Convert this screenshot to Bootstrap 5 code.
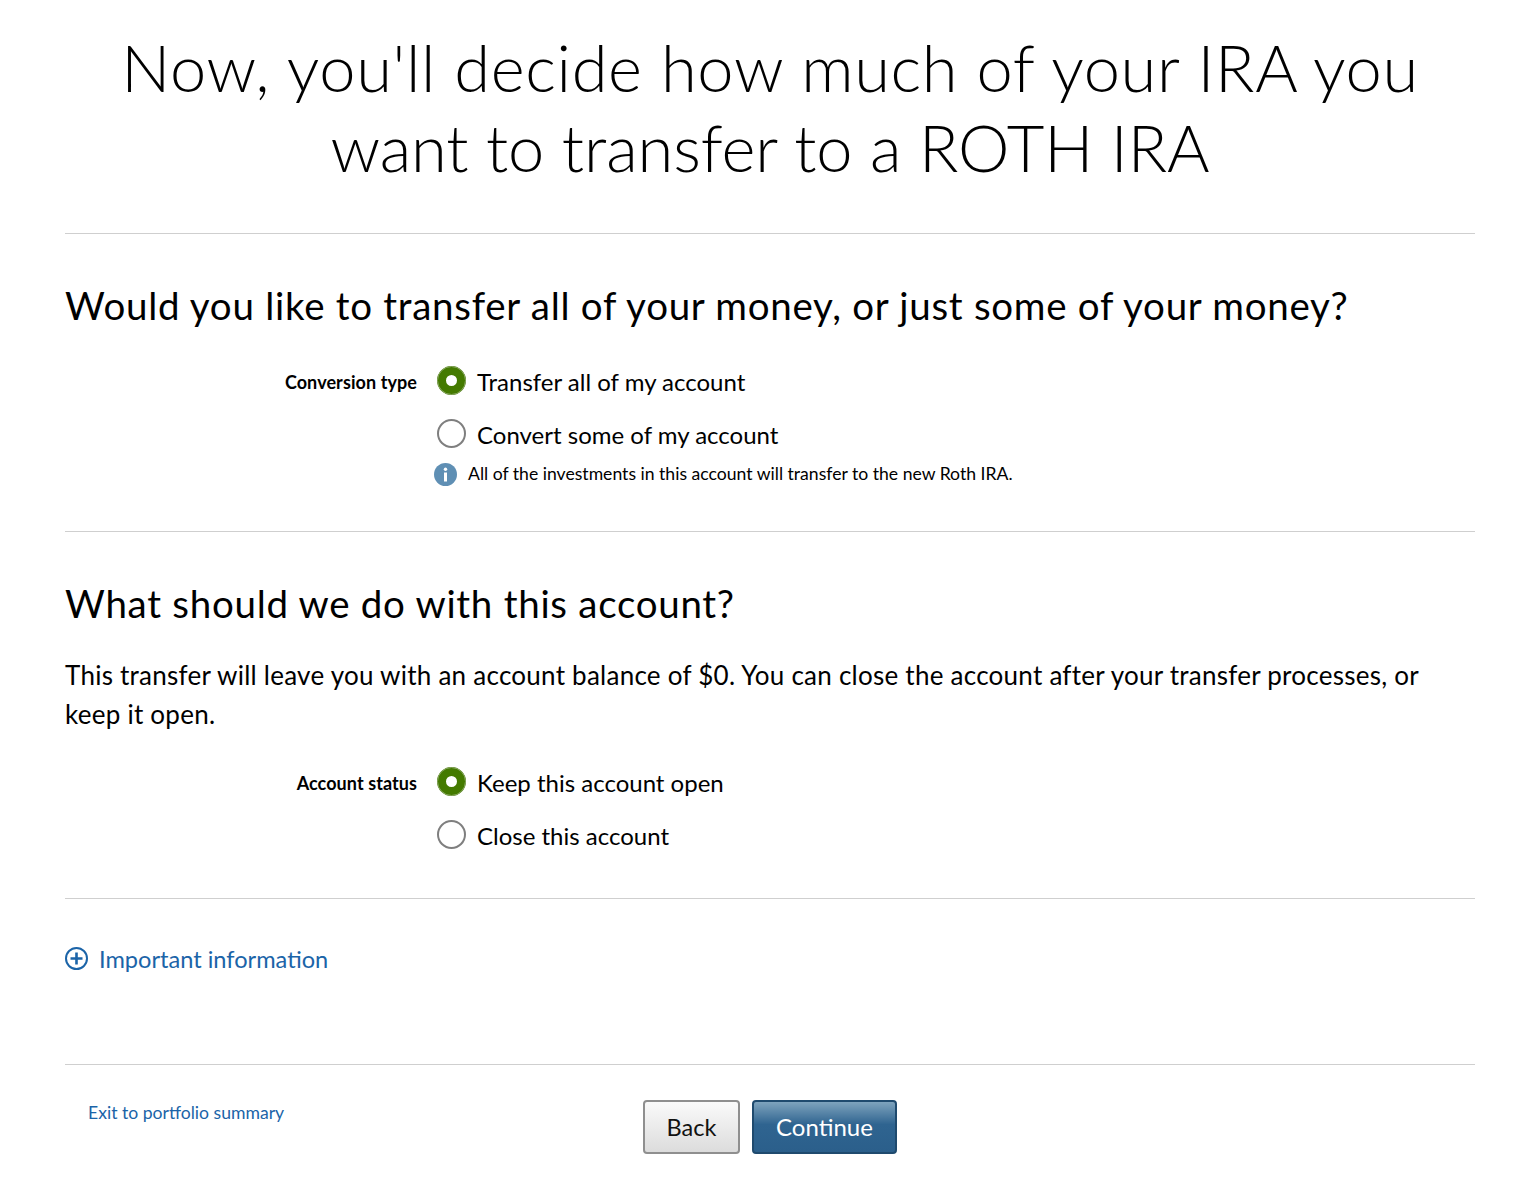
<!DOCTYPE html>
<html lang="en">
<head>
<meta charset="utf-8">
<title>Roth conversion</title>
<link href="https://cdn.jsdelivr.net/npm/bootstrap@5.3.0/dist/css/bootstrap.min.css" rel="stylesheet">
<style>
html,body{background:#fff;}
body{font-family:Lato,"Noto Sans",sans-serif;color:#000;font-size:24px;}
.page-wrap{padding:0 61px 0 65px;}
.main-title{font-size:65px;font-weight:300;line-height:80px;text-align:center;margin:0;padding:27px 0 46px;}
.title-one{display:block;letter-spacing:.65px;}
.title-two{display:block;letter-spacing:-.1px;}
.rule{height:1px;background:#cfcfcf;}
.sec-title{font-size:38.5px;font-weight:400;line-height:46px;margin:0;letter-spacing:.72px;}
.first-sec{padding:48px 0 0;height:297px;}
.first-sec .sec-title{margin-bottom:31px;}
.second-sec{padding:48px 0 0;height:366px;}
.field-row{display:flex;}
.field-label{width:352px;text-align:right;font-size:18px;font-weight:700;line-height:30px;flex:none;letter-spacing:.08px;}
.field-opts{padding-left:20px;}
.opt-row{display:flex;align-items:center;height:30px;margin-bottom:24px;}
.opt-row + .opt-row{margin-top:-1px;}
.opt-row:last-child{margin-bottom:0;}
.radio-dot{width:29px;height:29px;border-radius:50%;border:2px solid #7f7f7f;background:#fff;flex:none;margin-right:11px;margin-top:-3px;}
.radio-on{border:9px solid #447a00;outline:1px solid #8ba866;outline-offset:-1px;}
.opt-text{font-size:24px;line-height:30px;}
.hint-row{display:flex;align-items:center;font-size:17.6px;line-height:24px;margin:-12px 0 0 -3px;}
.hint-row svg{margin-right:11px;flex:none;}
.body-copy{font-size:26px;line-height:38.5px;letter-spacing:.25px;margin:30px 0 35px;}
.info-link{display:inline-flex;align-items:center;color:#1b64a8;text-decoration:none;font-size:23.6px;line-height:30px;}
.info-link svg{margin-right:11px;}
.info-area{height:165px;padding-top:44px;}
.foot-area{padding-top:35px;height:117px;}
.exit-link{font-size:17.6px;color:#1b64a8;text-decoration:none;line-height:24px;margin:1px 0 0 23px;width:555px;flex:none;}
.btn-back,.btn-next{height:54px;line-height:30px;border-radius:4px;padding:0;}
.btn-back{width:97px;font-size:23.5px;border:2px solid #8f8f8f;color:#111;background:linear-gradient(#fafafa,#dcdcdc);}
.btn-next{width:145px;font-size:24px;border:2px solid #1f4a6e;color:#fff;background:linear-gradient(#7ea3bd,#2f6490 45%,#2b5f8b);margin-left:12px;}
</style>
</head>
<body>
<div class="page-wrap">
<h1 class="main-title"><span class="title-one">Now, you'll decide how much of your IRA you</span><span class="title-two">want to transfer to a ROTH IRA</span></h1>
<div class="rule"></div>
<section class="first-sec">
<h2 class="sec-title">Would you like to transfer all of your money, or just some of your money?</h2>
<div class="field-row pt-2">
<div class="field-label">Conversion type</div>
<div class="field-opts">
<div class="opt-row"><span class="radio-dot radio-on"></span><span class="opt-text">Transfer all of my account</span></div>
<div class="opt-row"><span class="radio-dot"></span><span class="opt-text">Convert some of my account</span></div>
<div class="hint-row"><svg width="23" height="23" viewBox="0 0 23 23"><circle cx="11.5" cy="11.5" r="11.5" fill="#5f8fb4"/><circle cx="11.5" cy="6.3" r="1.7" fill="#fff"/><rect x="10" y="9.5" width="3" height="9" fill="#fff"/></svg><span>All of the investments in this account will transfer to the new Roth IRA.</span></div>
</div>
</div>
</section>
<div class="rule"></div>
<section class="second-sec">
<h2 class="sec-title">What should we do with this account?</h2>
<p class="body-copy">This transfer will leave you with an account balance of $0. You can close the account after your transfer processes, or keep it open.</p>
<div class="field-row">
<div class="field-label">Account status</div>
<div class="field-opts">
<div class="opt-row"><span class="radio-dot radio-on"></span><span class="opt-text">Keep this account open</span></div>
<div class="opt-row"><span class="radio-dot"></span><span class="opt-text">Close this account</span></div>
</div>
</div>
</section>
<div class="rule"></div>
<div class="info-area">
<a class="info-link" href="#"><svg width="23" height="23" viewBox="0 0 23 23" fill="none" stroke="#1b64a8"><circle cx="11.5" cy="11.5" r="10.5" stroke-width="2"/><path d="M11.5 5.5v12M5.5 11.5h12" stroke-width="2.6"/></svg>Important information</a>
</div>
<div class="rule"></div>
<div class="foot-area d-flex align-items-start">
<a class="exit-link" href="#">Exit to portfolio summary</a>
<button class="btn btn-back" type="button">Back</button>
<button class="btn btn-next" type="button">Continue</button>
</div>
</div>
<script src="https://cdn.jsdelivr.net/npm/bootstrap@5.3.0/dist/js/bootstrap.bundle.min.js"></script>
</body>
</html>
